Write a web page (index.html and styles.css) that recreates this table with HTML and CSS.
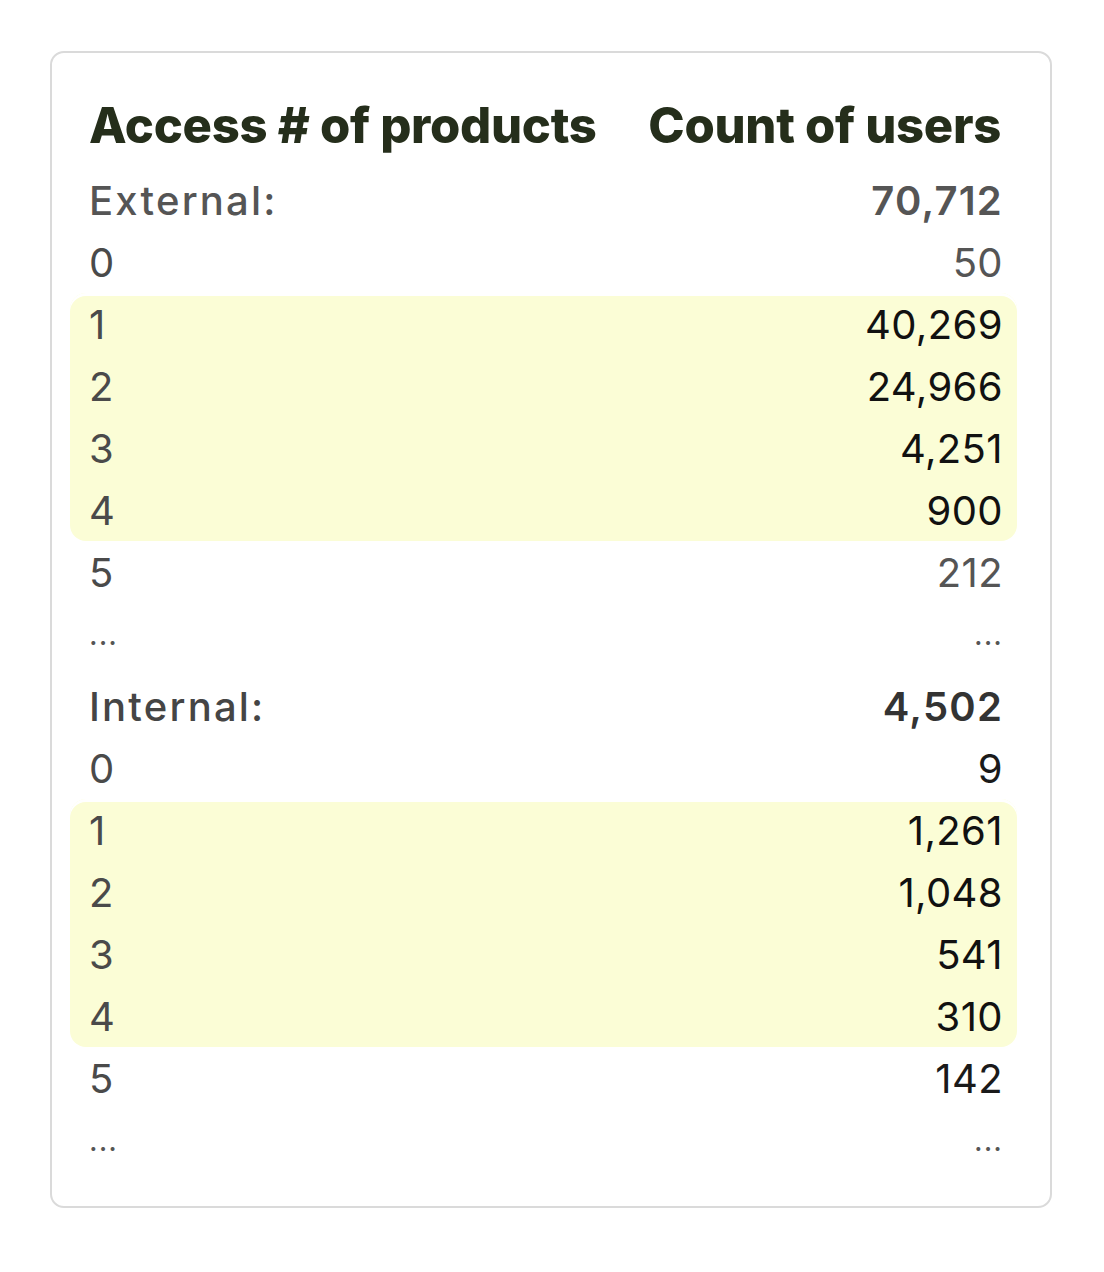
FILE: index.html
```html
<!DOCTYPE html>
<html lang="en">
<head>
<meta charset="utf-8">
<title>Access # of products</title>
<link rel="stylesheet" href="styles.css">
</head>
<body>
<div class="card">
  <div class="head">
    <span>Access # of products</span>
    <span>Count of users</span>
  </div>

  <section class="group external">
    <div class="row total"><span>External:</span><span>70,712</span></div>
    <div class="row plain"><span>0</span><span>50</span></div>
    <div class="hl">
      <div class="row"><span>1</span><span>40,269</span></div>
      <div class="row"><span>2</span><span>24,966</span></div>
      <div class="row"><span>3</span><span>4,251</span></div>
      <div class="row"><span>4</span><span>900</span></div>
    </div>
    <div class="row plain"><span>5</span><span>212</span></div>
    <div class="row more"><span>...</span><span>...</span></div>
  </section>

  <section class="group internal">
    <div class="row total"><span>Internal:</span><span>4,502</span></div>
    <div class="row plain"><span>0</span><span>9</span></div>
    <div class="hl">
      <div class="row"><span>1</span><span>1,261</span></div>
      <div class="row"><span>2</span><span>1,048</span></div>
      <div class="row"><span>3</span><span>541</span></div>
      <div class="row"><span>4</span><span>310</span></div>
    </div>
    <div class="row plain"><span>5</span><span>142</span></div>
    <div class="row more"><span>...</span><span>...</span></div>
  </section>
</div>
</body>
</html>
```

FILE: styles.css
```css
html, body {
  margin: 0;
  padding: 0;
  background: #ffffff;
}

body {
  font-family: "Inter", "Noto Sans", sans-serif;
}

.card {
  box-sizing: border-box;
  margin: 51px 0 0 50px;
  width: 1002px;
  height: 1157px;
  border: 2px solid #dadada;
  border-radius: 14px;
  padding: 41px 33px 0 18px;
}

.head {
  display: flex;
  justify-content: space-between;
  padding: 0 16px 0 19px;
  height: 62px;
  align-items: center;
  font-size: 49px;
  font-weight: 800;
  letter-spacing: -0.3px;
  color: #252e1b;
}

.group {
  display: flex;
  flex-direction: column;
}

.external {
  margin-top: 13px;
}

.internal {
  margin-top: 10px;
}

.row {
  display: flex;
  justify-content: space-between;
  align-items: center;
  height: 62px;
  padding: 0 14px 0 19px;
  font-size: 40px;
  font-weight: 400;
  letter-spacing: 0.4px;
  color: #111111;
}

.row span:first-child {
  color: #4a4a4a;
}

.row.total {
  font-weight: 600;
  letter-spacing: 1.2px;
}

.row.total span:first-child {
  font-weight: 500;
  letter-spacing: 2.2px;
}

.external .row.total span:first-child {
  color: #555555;
}

.external .row.total span:last-child {
  color: #555555;
}

.internal .row.total span:first-child {
  color: #454545;
}

.internal .row.total span:last-child {
  color: #333333;
}

.external .row.plain span:last-child {
  color: #555555;
}

.internal .row.plain span:last-child {
  color: #1a1a1a;
}

.row.more span {
  color: #555555;
  font-size: 30px;
  letter-spacing: 1px;
}

.hl {
  background: #fbfdd6;
  border-radius: 16px;
  box-shadow: inset 0 3px 0 #ffffff;
}
```
